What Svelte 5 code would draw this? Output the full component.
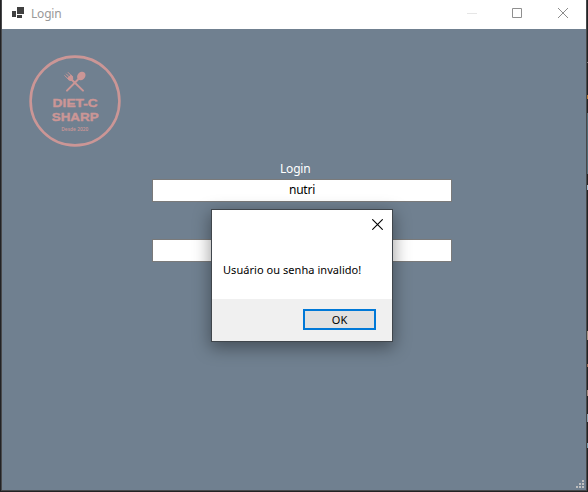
<script>
  let user = $state('nutri');
  let password = $state('');
  const cells = [[6, 0], [3, 3], [6, 3], [0, 6], [3, 6], [6, 6]];
</script>

<div class="desktop">
  <div class="window">
    <header>
      <svg class="app" width="14" height="13" viewBox="0 0 14 13" fill="#404040" shape-rendering="crispEdges">
        <path d="M0 4h4v6H0zM5 0h7v7H5zM5 8h5v3H5z" />
      </svg>
      <span class="title">Login</span>
      <div class="controls">
        <svg width="10" height="10" viewBox="0 0 10 10"><path d="M0 5.5h10" stroke="#e6e6e6" /></svg>
        <svg width="10" height="10" viewBox="0 0 10 10"><path d="M.5.5h9v9h-9z" fill="none" stroke="#8f8f8f" /></svg>
        <svg class="x" width="10" height="10" viewBox="0 0 10 10"><path d="M0 0l10 10M10 0L0 10" stroke="#8c8c8c" /></svg>
      </div>
    </header>

    <main>
      <svg class="logo" width="92" height="92" viewBox="0 0 92 92" fill="#cb9696">
        <circle cx="46" cy="46" r="44.4" fill="none" stroke="#cb9696" stroke-width="2.6" />
        <g stroke="#cb9696" stroke-linecap="round" fill="none">
          <path d="M38 35.6L50.5 23M54 35.6L42 24" stroke-width="2" />
          <path d="M35.8 20.6l4.4 4.4M37.4 19l4.4 4.4M39.2 17.5l4.2 4.3" stroke-width="1" />
        </g>
        <ellipse cx="52.3" cy="21" rx="3.8" ry="4.7" transform="rotate(42 52.3 21)" />
        <path d="M38.2 23.2l3.8-3.8 2 2.4q.6 2.2-.6 3.6-1.8 1-3.4.2z" />
        <g stroke="#cb9696" stroke-width=".4">
          <text x="23.6" y="52.3" font-size="11.4" font-weight="700" textLength="45.2" lengthAdjust="spacingAndGlyphs">DIET-C</text>
          <text x="22.7" y="65.5" font-size="11.4" font-weight="700" textLength="47" lengthAdjust="spacingAndGlyphs">SHARP</text>
        </g>
        <text class="since" x="32.3" y="76" font-size="4.8" font-weight="600" textLength="27" lengthAdjust="spacingAndGlyphs">Desde 2020</text>
      </svg>

      <form>
        <label for="user">Login</label>
        <input id="user" bind:value={user} />
        <input class="password" type="password" aria-label="Senha" bind:value={password} />
      </form>

      <div class="dialog" role="alertdialog" aria-labelledby="message">
        <div class="body">
          <svg class="close" width="11" height="11" viewBox="0 0 11 11"><path d="M.3.3l10.4 10.4M10.7.3L.3 10.7" stroke="#000" stroke-width="1.1" /></svg>
          <p id="message">Usuário ou senha invalido!</p>
        </div>
        <footer><button>OK</button></footer>
      </div>

      <svg class="grip" width="8" height="8" viewBox="0 0 8 8" fill="#bfbfbf">
        {#each cells as [x, y]}<rect {x} {y} width="2" height="2" />{/each}
      </svg>
    </main>
  </div>
</div>

<style>
  :global(body) { overflow: hidden; }
  .desktop {
    box-sizing: border-box;
    width: 588px;
    height: 492px;
    padding: 0 1px 1px;
    background:
      linear-gradient(transparent 62px, #777 62px 63px, transparent 63px 95px, #b87b35 95px 99px, transparent 99px 113px, #536b76 113px 174px, transparent 174px 185px, #a5bfd0 185px 190px, transparent 190px 331px, #a79486 331px 340px, transparent 340px 364px, #976d58 364px 367px, transparent 367px 390px, #a58c82 390px 396px, transparent 396px 414px, #91a5b2 414px 422px, transparent 422px 443px, #789cac 443px 448px, transparent 448px) right / 1px 100% no-repeat,
      #222224;
    font-family: "Noto Sans", "Open Sans", sans-serif;
    font-size: 12px;
  }
  .window {
    box-sizing: border-box;
    height: 491px;
    border: 1px solid #48494b;
    border-top: 0;
    display: flex;
    flex-direction: column;
  }
  header {
    height: 29px;
    flex: none;
    display: flex;
    align-items: flex-start;
    background: #fff;
    color: #999;
  }
  .app { margin: 7px 0 0 10px; }
  .title { margin: 6px 0 0 5px; line-height: 16px; letter-spacing: -.2px; }
  .controls { margin: 8px 18px 0 auto; display: flex; gap: 35px; }
  .controls svg { display: block; }
  .controls .x { margin-left: 1px; }
  main { position: relative; flex: 1; background: #708090; }
  .logo {
    display: block;
    margin-left: 27px;
    padding-top: 26px;
    font-family: "Liberation Sans", Arial, sans-serif;
    overflow: visible;
  }
  .since { font-family: "Open Sans", "Noto Sans", sans-serif; }
  form { display: flex; flex-direction: column; width: 300px; margin: 14px 0 0 150px; }
  label { margin-left: 128px; line-height: 16px; height: 18px; color: #fff; letter-spacing: -.2px; }
  input {
    box-sizing: border-box;
    width: 300px;
    height: 23px;
    padding: 0 0 2px;
    border: 1px solid #7a7a7a;
    border-radius: 0;
    background: #fff;
    color: #000;
    font: inherit;
    letter-spacing: -.25px;
    text-align: center;
    outline: 0;
  }
  .password { margin-top: 37px; }
  .dialog {
    position: absolute;
    left: 209px;
    top: 180px;
    box-sizing: border-box;
    width: 182px;
    height: 133px;
    display: flex;
    flex-direction: column;
    border: 1px solid #40464c;
    background: #fff;
    box-shadow: 0 5px 16px 1px rgba(0, 0, 0, .38);
    font-size: 11px;
    color: #000;
  }
  .body { height: 89px; display: flex; flex-direction: column; }
  .close { align-self: flex-end; margin: 9px 9px 0 0; }
  p { margin: 32px 0 0 11px; line-height: 16px; white-space: nowrap; letter-spacing: .05px; }
  footer {
    flex: 1;
    display: flex;
    justify-content: flex-end;
    align-items: flex-start;
    padding: 10px 16px 0 0;
    background: #f0f0f0;
  }
  button {
    box-sizing: border-box;
    width: 73px;
    height: 21px;
    padding: 0;
    border: 2px solid #0078d7;
    border-radius: 0;
    background: #e1e1e1;
    color: #000;
    font: inherit;
    line-height: 17px;
  }
  .grip { position: absolute; right: 2px; bottom: 2px; }
</style>
